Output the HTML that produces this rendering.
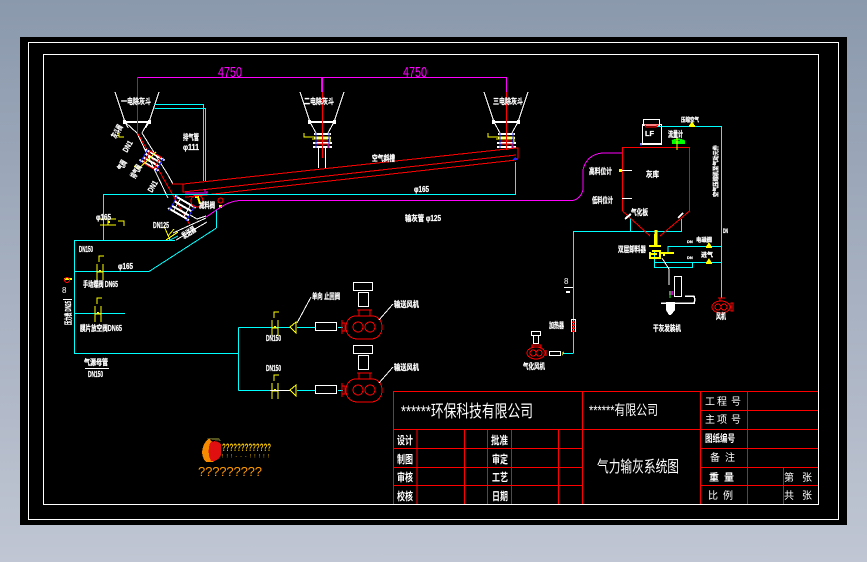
<!DOCTYPE html>
<html lang="zh">
<head>
<meta charset="utf-8">
<title>气力输灰系统图</title>
<style>
html,body{margin:0;padding:0;width:867px;height:562px;overflow:hidden;background:#a5afc0}
svg{display:block;shape-rendering:crispEdges}
text{font-family:"Liberation Sans","WenQuanYi Zen Hei","Noto Sans CJK SC",sans-serif;fill:#fff}
.l{font-size:8px;font-weight:bold;stroke:#fff;stroke-width:.25px}
.t{font-size:11px;font-weight:bold}
.f{fill:none}
</style>
</head>
<body>
<svg width="867" height="562" viewBox="0 0 867 562" xmlns="http://www.w3.org/2000/svg">
<defs>
<linearGradient id="bg" x1="0" y1="0" x2="0" y2="1">
<stop offset="0" stop-color="#8b99ad"/><stop offset="1" stop-color="#c0c6d3"/>
</linearGradient>
<g id="hop" fill="none">
<path d="M-22 0L-12 30M22 0L12 30M-12 30L-6 41M12 30L6 41" stroke="#fff" stroke-width="1"/>
<path d="M-13 30H13" stroke="#fff" stroke-width="2"/>
<rect x="-14" y="28" width="3" height="4" fill="#fff"/><rect x="11" y="28" width="3" height="4" fill="#fff"/>
<path d="M-8 42H9M-8 46H9M-9 51H10M-9 55H10" stroke="#fff" stroke-width="2"/>
<path d="M-18 41V45H8V50M-10 47H6" stroke="#ff0" stroke-width="1"/>
<path d="M-6 41V56M7 41V56" stroke="#22f" stroke-width="1"/>
<path d="M-5 49H6M-5 52H6V56" stroke="#f00" stroke-width="1"/>
</g>
<g id="pump" fill="none">
<path d="M-6-11C-14-12-18-6-18 0C-18 7-14 12-6 12H6C14 12 18 7 18 0C18-6 14-12 6-11Z" stroke="#f00" stroke-width="1"/>
<circle cx="-6" cy="0" r="5" stroke="#f00"/><circle cx="6" cy="0" r="5" stroke="#f00"/>
<path d="M-22-7V7M-19-4V4H-22M-19-4H-22M-7-17H8M-5-17V-11M6-17V-11" stroke="#f00" stroke-width="1"/>
<rect x="-5.500" y="-34.500" width="10" height="14" stroke="#fff"/><rect x="-10.500" y="-44.500" width="19" height="8" stroke="#fff"/>
<rect x="-48.500" y="-4.500" width="21" height="8" stroke="#fff"/>
<path d="M15-7L29-23" stroke="#fff"/>
</g>
<g id="valve" fill="none">
<path d="M-3-7V9M3-7V9M-3 1H3" stroke="#ff0" stroke-width="1"/>
<path d="M-1-9V-15H4" stroke="#ff0" stroke-width="1"/>
<rect x="-1" y="-1" width="2" height="2" fill="#ff0"/>
</g>
<g id="vs" fill="#ff0"><path d="M-3 2L0-3L3 2Z"/><rect x="-3" y="1" width="6" height="2"/></g>
</defs>

<rect width="867" height="562" fill="url(#bg)"/>
<rect x="20" y="37" width="827" height="488" fill="#000"/>
<g fill="none" stroke="#fff" stroke-width="1">
<rect x="28.500" y="42.500" width="810" height="477"/>
<rect x="43.500" y="54.500" width="775" height="450"/>
</g>

<!-- dimensions -->
<g>
<path d="M137.500 110V77.500H506.500V92M322.500 77.500V92" fill="none" stroke="#f0f" stroke-width="1"/>
<path d="M322 77V92" stroke="#f0f" stroke-width="2"/>
</g>
<text x="218" y="77" font-size="15" textLength="24" lengthAdjust="spacingAndGlyphs" style="fill:#f0f">4750</text>
<text x="403" y="77" font-size="15" textLength="24" lengthAdjust="spacingAndGlyphs" style="fill:#f0f">4750</text>

<!-- hoppers -->
<use href="#hop" x="137" y="92"/>
<rect x="124" y="128" width="30" height="44" fill="#000"/>
<use href="#hop" x="322" y="92"/>
<use href="#hop" x="506" y="92"/>
<path d="M318.500 147V168M325.500 147V168" stroke="#fff"/>
<path d="M322.500 92V158M506.500 92V150" stroke="#f00"/>

<!-- hopper 1 -->
<path d="M125 122L137 133L168 198M148 122L142 133L168 175L173 184H184" fill="none" stroke="#fff"/>
<path d="M137.500 77V133L190 225" fill="none" stroke="#f00"/>
<g transform="rotate(30 152 160)">
<path d="M141 154H163M141 166H163M143 158H161M143 162H161" stroke="#fff" stroke-width="2"/>
<rect x="146" y="153" width="12" height="14" fill="none" stroke="#f00"/>
<path d="M143 152V168M161 152V168" stroke="#22f"/>
</g>
<path d="M134 166L138 169L148 160L156 152" fill="none" stroke="#ff0"/>
<g transform="rotate(30 182 208)">
<path d="M170 201H194M170 215H194M172 206H192M172 211H192" stroke="#fff" stroke-width="2"/>
<rect x="176" y="201" width="12" height="14" fill="none" stroke="#fff"/>
<path d="M172 199V217M192 199V217" stroke="#22f"/>
</g>
<path d="M190 215L197 219L206 216M173 233L206 218M176 240L207 222" fill="none" stroke="#fff"/>
<path d="M164 226L170 240M168 236L174 229M166 240L178 232" fill="none" stroke="#ff0"/>
<circle cx="197" cy="201" r="6" fill="none" stroke="#f00"/>
<path d="M195 197H198L200 204" fill="none" stroke="#ff0" stroke-width="2"/>
<circle cx="220.500" cy="200.500" r="2.500" fill="none" stroke="#f00"/>
<rect x="219" y="205" width="3" height="3" fill="#ff0"/>

<!-- conveyor -->
<g fill="none" stroke="#f00" stroke-width="1">
<path d="M172 184H183L516 148H518V158L514 160"/>
<path d="M183 184V192L516 155"/>
<path d="M185 197H187L516 160"/>
</g>
<path d="M185 193H207V191M205 192V189" fill="none" stroke="#f0f" stroke-width="1"/>
<path d="M512 160L515 157L518 160Z" fill="#22f"/>

<!-- air + cyan lines -->
<g fill="none" stroke="#0ff" stroke-width="1">
<path d="M154.500 104.500H203.500V181M154.500 108.500H205.500M205.500 108V181"/>
<path d="M103.500 240V194.500H515.500V162"/>
<path d="M103.500 228V240M74.500 240.500H175M74.500 240V353.500H238.500M74.500 271.500H149"/>
<path d="M74.500 313.500H125"/>
<path d="M238.500 327.500V390.500M238.500 327.500H290M297 327.500H316M338 327.500H343M238.500 390.500H290M297 390.500H316M338 390.500H343"/>
<path d="M216.500 210V228"/>
<path d="M657 126.500H721.500V298"/>
<path d="M573.500 353.500V231.500H681.500V219M630.500 231.500V218"/>
<path d="M668 246.500H722M654 262.500H722M654.500 250V267.500H692.500V262M668 246V252M563 353.500H573"/>
</g>
<path d="M149 271.500L216.500 228M170 240L178 236" fill="none" stroke="#0ff"/>

<!-- magenta line -->
<path d="M206 217C216 211 226 201 240 200.500H572C578 200 583 194 583 188V170C585 160 592 154 602 153H622" fill="none" stroke="#f0f" stroke-width="1"/>

<!-- pumps / valves left -->
<use href="#pump" x="364" y="327"/>
<use href="#pump" x="364" y="390"/>
<use href="#valve" x="275" y="327"/>
<use href="#valve" x="275" y="390"/>
<use href="#valve" x="100" y="271"/>
<use href="#valve" x="98" y="313"/>
<use href="#valve" x="103" y="216" transform="rotate(90 103 222)"/>
<path d="M296 322L290 327L296 333ZM296 385L290 390L296 396Z" fill="none" stroke="#ff0"/>
<path d="M290 390.500H270" stroke="#fff"/>
<path d="M297 323L311 297" stroke="#fff"/>
<path d="M64 279H72" stroke="#ff0" stroke-width="2"/>
<circle cx="67" cy="280" r="2.500" fill="none" stroke="#f00"/>
<path d="M63 299.500H72M85 368.500H109" stroke="#fff"/>

<!-- silo -->
<path d="M622.500 211V147.500H689.500V211L660 236M622.500 211L650 236" fill="none" stroke="#f00"/>
<g fill="none" stroke="#fff">
<rect x="643.500" y="119.500" width="16" height="6"/>
<rect x="642.500" y="124.500" width="19" height="20"/>
<path d="M640 144H662" stroke-width="2"/>
<path d="M621 170.500H632M622 198.500H632"/>
</g>
<path d="M645 125H658L656 127H646Z" fill="none" stroke="#f00"/>
<path d="M641 143V146" stroke="#22f"/>
<path d="M672 142H684M672 141C676 139 680 139 684 141V143H672" fill="none" stroke="#0f0" stroke-width="2"/>
<path d="M677 138V150" stroke="#ff0"/>
<path d="M625 219L631 214M678 218L683 213" stroke="#fff" stroke-width="2"/>
<use href="#vs" x="692" y="124"/>
<use href="#vs" x="709" y="245"/>
<use href="#vs" x="709" y="261"/>
<rect x="619" y="169" width="3" height="3" fill="#ff0"/>

<!-- discharge -->
<path d="M655 234V247M649 246H661M651 254H657M652 251H660V258H650V252M660 253H674M664 252V256" fill="none" stroke="#ff0" stroke-width="2"/>
<path d="M656 230V246" stroke="#ff0" stroke-width="3"/>
<path d="M662 258L669 269V285" fill="none" stroke="#fff"/>
<rect x="674.500" y="276.500" width="7" height="20" fill="none" stroke="#fff"/>
<path d="M661 303H695M685 296H694L695 300L694 303" fill="none" stroke="#fff" stroke-width="1.500"/>
<path d="M666 302H675V310L671 315H669L666 310Z" fill="#fff"/>
<rect x="669" y="291" width="4" height="4" fill="#f0f" opacity=".8"/>
<path d="M670 291V298" stroke="#0f0"/>

<!-- right small fan -->
<g fill="none" stroke="#f00">
<ellipse cx="721" cy="307" rx="9" ry="6"/><circle cx="718" cy="307" r="3"/><circle cx="724" cy="307" r="3"/>
<path d="M718 298H725M720 298V301M731 303V311H733V303Z"/>
</g>
<!-- left fan -->
<g fill="none">
<ellipse cx="536" cy="353" rx="9" ry="6" stroke="#f00"/><circle cx="533" cy="353" r="3" stroke="#f00"/><circle cx="539" cy="353" r="3" stroke="#f00"/>
<path d="M532 345H541V347H532ZM546 350V356" stroke="#f00"/>
<rect x="533.500" y="335.500" width="5" height="8" stroke="#fff"/>
<rect x="531.500" y="331.500" width="9" height="4" stroke="#fff"/>
<rect x="549.500" y="351.500" width="11" height="4" stroke="#fff"/>
<rect x="571.500" y="319.500" width="4" height="12" stroke="#fff"/>
<path d="M572 322H575M572 325H575M572 328H575M572 331H575" stroke="#f00" stroke-width="1.500"/>
</g>
<path d="M563 351L562 356L564 353Z" fill="#ff0"/>
<path d="M564 287.500H573" stroke="#fff"/><rect x="566" y="291" width="4" height="2" fill="#fff"/>

<!-- diagram labels -->
<text class="l" x="121" y="104" textLength="30" lengthAdjust="spacingAndGlyphs">一电除灰斗</text>
<text class="l" x="304" y="104" textLength="30" lengthAdjust="spacingAndGlyphs">二电除灰斗</text>
<text class="l" x="493" y="104" textLength="30" lengthAdjust="spacingAndGlyphs">三电除灰斗</text>
<text class="l" x="372" y="161" textLength="23" lengthAdjust="spacingAndGlyphs">空气斜槽</text>
<text class="l" x="183" y="140" textLength="16" lengthAdjust="spacingAndGlyphs">排气管</text>
<text class="l" x="183" y="150" textLength="16" lengthAdjust="spacingAndGlyphs">φ111</text>
<text class="l" x="414" y="192" textLength="15" lengthAdjust="spacingAndGlyphs">φ165</text>
<text class="l" x="405" y="221" textLength="36" lengthAdjust="spacingAndGlyphs">输灰管 φ125</text>
<text class="l" x="96" y="220" textLength="15" lengthAdjust="spacingAndGlyphs">φ165</text>
<text class="l" x="118" y="269" textLength="15" lengthAdjust="spacingAndGlyphs">φ165</text>
<text class="l" x="79" y="252" textLength="14" lengthAdjust="spacingAndGlyphs">DN150</text>
<text class="l" x="83" y="287" textLength="35" lengthAdjust="spacingAndGlyphs">手动蝶阀 DN65</text>
<text class="l" x="80" y="331" textLength="42" lengthAdjust="spacingAndGlyphs">膜片放空阀DN65</text>
<text class="l" x="84" y="365" textLength="24" lengthAdjust="spacingAndGlyphs">气源母管</text>
<text class="l" x="88" y="377" textLength="15" lengthAdjust="spacingAndGlyphs">DN150</text>
<text class="l" x="266" y="341" textLength="15" lengthAdjust="spacingAndGlyphs">DN150</text>
<text class="l" x="266" y="371" textLength="15" lengthAdjust="spacingAndGlyphs">DN150</text>
<text class="l" x="312" y="299" textLength="28" lengthAdjust="spacingAndGlyphs">单向 止回阀</text>
<text class="l" x="394" y="307" textLength="25" lengthAdjust="spacingAndGlyphs">输送风机</text>
<text class="l" x="394" y="370" textLength="25" lengthAdjust="spacingAndGlyphs">输送风机</text>
<text class="l" x="153" y="228" textLength="16" lengthAdjust="spacingAndGlyphs">DN125</text>
<text class="l" x="199" y="208" textLength="16" lengthAdjust="spacingAndGlyphs">减料阀</text>
<text class="l" transform="translate(184 239) rotate(-33)" textLength="15" lengthAdjust="spacingAndGlyphs">发送器</text>
<text class="l" transform="translate(116 139) rotate(-60)" textLength="14" lengthAdjust="spacingAndGlyphs">灰斗阀</text>
<text class="l" transform="translate(127 153) rotate(-60)" textLength="12" lengthAdjust="spacingAndGlyphs">DN1</text>
<text class="l" transform="translate(122 171) rotate(-60)" textLength="10" lengthAdjust="spacingAndGlyphs">气阀</text>
<text class="l" transform="translate(135 179) rotate(-60)" textLength="14" lengthAdjust="spacingAndGlyphs">排气阀</text>
<text class="l" transform="translate(152 193) rotate(-60)" textLength="12" lengthAdjust="spacingAndGlyphs">DN1</text>
<text class="l" transform="translate(71 325) rotate(-90)" textLength="24" lengthAdjust="spacingAndGlyphs">压力表 DN25</text>
<text x="62" y="293" font-size="8">8</text>
<text x="564" y="284" font-size="8">8</text>
<text class="l" x="589" y="174" textLength="23" lengthAdjust="spacingAndGlyphs">高料位计</text>
<text class="l" x="592" y="203" textLength="21" lengthAdjust="spacingAndGlyphs">低料位计</text>
<text class="l" x="646" y="177" textLength="13" lengthAdjust="spacingAndGlyphs">灰库</text>
<text class="l" x="631" y="215" textLength="17" lengthAdjust="spacingAndGlyphs">气化板</text>
<text class="l" x="645" y="136" textLength="9" lengthAdjust="spacingAndGlyphs" style="font-size:7px">LF</text>
<text class="l" x="668" y="137" textLength="15" lengthAdjust="spacingAndGlyphs">流量计</text>
<text class="l" x="681" y="122" textLength="18" lengthAdjust="spacingAndGlyphs" style="font-size:6px">压缩空气</text>
<text class="l" x="618" y="252" textLength="28" lengthAdjust="spacingAndGlyphs">双层卸料器</text>
<text class="l" x="653" y="331" textLength="28" lengthAdjust="spacingAndGlyphs">干灰发装机</text>
<text class="l" x="549" y="328" textLength="15" lengthAdjust="spacingAndGlyphs">加热器</text>
<text class="l" x="523" y="369" textLength="22" lengthAdjust="spacingAndGlyphs">气化风机</text>
<text class="l" x="716" y="319" textLength="10" lengthAdjust="spacingAndGlyphs">风机</text>
<text class="l" x="696" y="242" textLength="16" lengthAdjust="spacingAndGlyphs" style="font-size:6px">电磁阀</text>
<text class="l" x="701" y="257" textLength="12" lengthAdjust="spacingAndGlyphs" style="font-size:6px">进气</text>
<text class="l" x="687" y="243" style="font-size:4px">DN</text>
<text class="l" x="687" y="259" style="font-size:4px">DN</text>
<text class="l" transform="translate(718 197) rotate(-90)" textLength="52" lengthAdjust="spacingAndGlyphs" style="font-size:6px">空气压缩机至气动元件</text>
<text class="l" x="723" y="233" textLength="5" lengthAdjust="spacingAndGlyphs" style="font-size:6px">DN</text>

<!-- logo -->
<path d="M209 438C201 445 200 456 206 462H214C209 458 207 448 212 442Z" fill="#f58a00"/>
<path d="M210 443C213 440 218 441 221 444V455C219 460 214 462 211 461C208 456 208 448 210 443Z" fill="#e01010"/>
<path d="M206 438H219L221 441L213 440Z" fill="#552"/>
<text x="222" y="451" font-size="11" font-weight="bold" textLength="49" lengthAdjust="spacingAndGlyphs" style="fill:#fc0">?????????????</text>
<text x="222" y="458" font-size="5" textLength="48" lengthAdjust="spacingAndGlyphs" letter-spacing="1" style="fill:#fc0">! ! ! - - - ! ! ! ! !</text>
<text x="198" y="476" font-size="13" textLength="64" lengthAdjust="spacing" style="fill:#f90">?????????</text>

<!-- title block -->
<g fill="none" stroke="#f00" stroke-width="1">
<path d="M393.500 504V391.500H818"/>
<path d="M393.500 429.500H700.500M393.500 448.500H582M393.500 467.500H582M393.500 485.500H582"/>
<path d="M417 429V504M464.500 429V504M487.500 429V504M511.500 429V504M558.500 429V504"/>
<path d="M582.500 391V504"/>
<path d="M700.500 391V504M747.500 391V504M783.500 467V504"/>
<path d="M700 410.500H818M700 429.500H818M700 448.500H818M700 467.500H818M700 485.500H818"/>
</g>
<text x="401" y="417" font-size="17" textLength="132" lengthAdjust="spacingAndGlyphs">******环保科技有限公司</text>
<text x="589" y="415" font-size="14" textLength="69" lengthAdjust="spacingAndGlyphs">******有限公司</text>
<text x="597" y="472" font-size="16" textLength="82" lengthAdjust="spacingAndGlyphs">气力输灰系统图</text>
<g>
<text class="t" x="397" y="444" textLength="16" lengthAdjust="spacingAndGlyphs">设计</text>
<text class="t" x="397" y="463" textLength="16" lengthAdjust="spacingAndGlyphs">制图</text>
<text class="t" x="397" y="481" textLength="16" lengthAdjust="spacingAndGlyphs">审核</text>
<text class="t" x="397" y="500" textLength="16" lengthAdjust="spacingAndGlyphs">校核</text>
<text class="t" x="491" y="444" textLength="17" lengthAdjust="spacingAndGlyphs">批准</text>
<text class="t" x="492" y="463" textLength="16" lengthAdjust="spacingAndGlyphs">审定</text>
<text class="t" x="492" y="481" textLength="16" lengthAdjust="spacingAndGlyphs">工艺</text>
<text class="t" x="492" y="500" textLength="16" lengthAdjust="spacingAndGlyphs">日期</text>
</g>
<g font-size="10">
<text x="705" y="405">工</text><text x="717" y="405">程</text><text x="731" y="405">号</text>
<text x="705" y="423">主</text><text x="717" y="423">项</text><text x="731" y="423">号</text>
<text x="705" y="442" font-weight="bold" textLength="30" lengthAdjust="spacingAndGlyphs">图纸编号</text>
<text x="710" y="461">备</text><text x="725" y="461">注</text>
<text x="709" y="481" font-weight="bold">重</text><text x="724" y="481" font-weight="bold">量</text>
<text x="708" y="499">比</text><text x="723" y="499">例</text>
<text x="784" y="481">第</text><text x="802" y="481">张</text>
<text x="784" y="499">共</text><text x="802" y="499">张</text>
</g>
</svg>
</body>
</html>
